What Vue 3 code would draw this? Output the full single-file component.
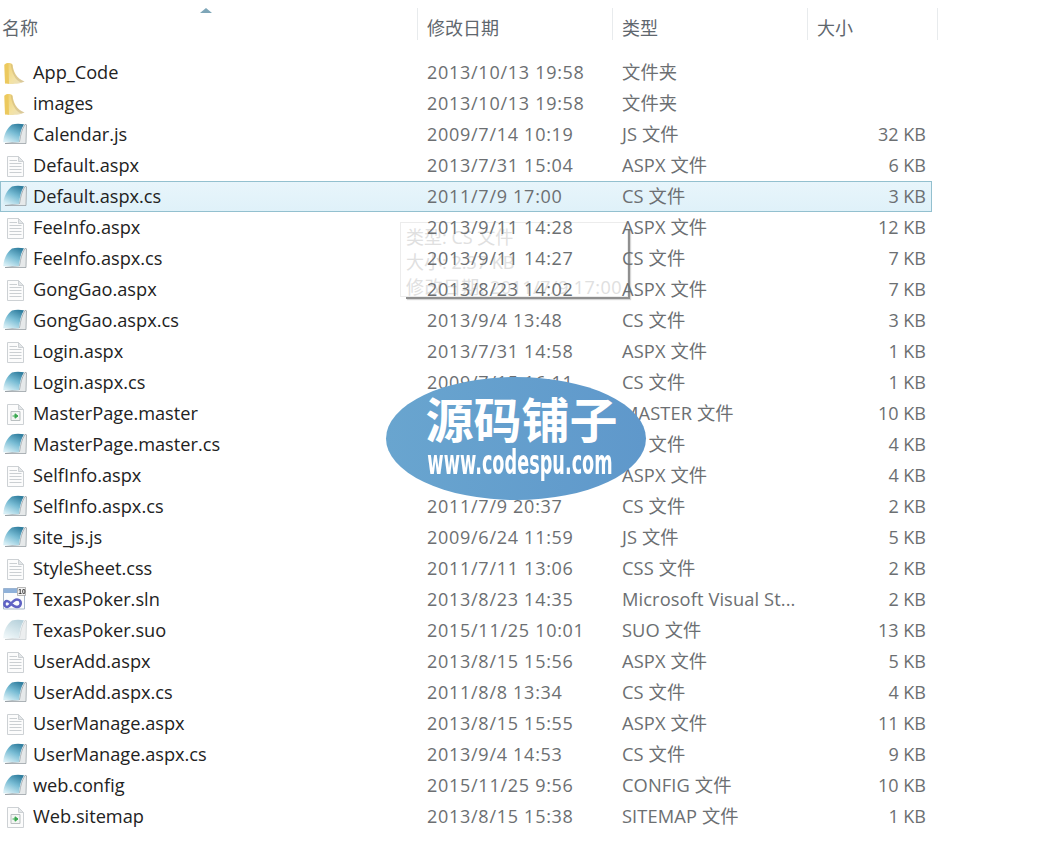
<script setup>
const rows = [
  ['App_Code','2013/10/13 19:58','文件夹','','folder'],
  ['images','2013/10/13 19:58','文件夹','','folder'],
  ['Calendar.js','2009/7/14 10:19','JS 文件','32 KB','cs'],
  ['Default.aspx','2013/7/31 15:04','ASPX 文件','6 KB','page'],
  ['Default.aspx.cs','2011/7/9 17:00','CS 文件','3 KB','cs'],
  ['FeeInfo.aspx','2013/9/11 14:28','ASPX 文件','12 KB','page'],
  ['FeeInfo.aspx.cs','2013/9/11 14:27','CS 文件','7 KB','cs'],
  ['GongGao.aspx','2013/8/23 14:02','ASPX 文件','7 KB','page'],
  ['GongGao.aspx.cs','2013/9/4 13:48','CS 文件','3 KB','cs'],
  ['Login.aspx','2013/7/31 14:58','ASPX 文件','1 KB','page'],
  ['Login.aspx.cs','2009/7/15 16:11','CS 文件','1 KB','cs'],
  ['MasterPage.master','2013/8/23 14:02','MASTER 文件','10 KB','master'],
  ['MasterPage.master.cs','2013/9/4 14:53','CS 文件','4 KB','cs'],
  ['SelfInfo.aspx','2013/8/15 15:56','ASPX 文件','4 KB','page'],
  ['SelfInfo.aspx.cs','2011/7/9 20:37','CS 文件','2 KB','cs'],
  ['site_js.js','2009/6/24 11:59','JS 文件','5 KB','cs'],
  ['StyleSheet.css','2011/7/11 13:06','CSS 文件','2 KB','page'],
  ['TexasPoker.sln','2013/8/23 14:35','Microsoft Visual St...','2 KB','sln'],
  ['TexasPoker.suo','2015/11/25 10:01','SUO 文件','13 KB','suo'],
  ['UserAdd.aspx','2013/8/15 15:56','ASPX 文件','5 KB','page'],
  ['UserAdd.aspx.cs','2011/8/8 13:34','CS 文件','4 KB','cs'],
  ['UserManage.aspx','2013/8/15 15:55','ASPX 文件','11 KB','page'],
  ['UserManage.aspx.cs','2013/9/4 14:53','CS 文件','9 KB','cs'],
  ['web.config','2015/11/25 9:56','CONFIG 文件','10 KB','cs'],
  ['Web.sitemap','2013/8/15 15:38','SITEMAP 文件','1 KB','master'],
].map(([name, date, type, size, icon]) => ({ name, date, type, size, icon }))
</script>

<template>
  <div class="screen">
    <svg class="defs" width="0" height="0" aria-hidden="true">
      <defs>
        <linearGradient id="blue" x1="0.8" y1="0" x2="0.25" y2="1">
          <stop offset="0" stop-color="#2c7a9b" />
          <stop offset="0.5" stop-color="#78bcd4" />
          <stop offset="1" stop-color="#d6eef5" />
        </linearGradient>
        <linearGradient id="pale" x1="0.8" y1="0" x2="0.25" y2="1">
          <stop offset="0" stop-color="#b5d0da" />
          <stop offset="1" stop-color="#eff7f9" />
        </linearGradient>
        <linearGradient id="yellow" x1="0" y1="0" x2="1" y2="1">
          <stop offset="0" stop-color="#f0cf68" />
          <stop offset="0.6" stop-color="#f3e2a4" />
          <stop offset="1" stop-color="#e8dfc4" />
        </linearGradient>
      </defs>
    </svg>

    <header class="head">
      <div class="hcell hname">名称<i class="sort"></i></div>
      <div class="hcell">修改日期</div>
      <div class="hcell">类型</div>
      <div class="hcell">大小</div>
    </header>

    <div class="list">
      <div v-for="r in rows" :key="r.name" class="row" :class="{ selected: r.name === 'Default.aspx.cs' }">
        <div class="name">
          <svg class="icon" width="27" height="29" viewBox="0 0 27 29">
            <template v-if="r.icon === 'folder'">
              <path d="M4.500 6.500C7 4.500 11 4.500 12.500 6.500C13 13 16.500 21 24.500 23.500C21 26 10 26.500 5 25.500Z" fill="url(#yellow)" />
              <path d="M4.500 7C5.500 5.500 7 5.200 8.500 5.200L9 25.800L5 25.300Z" fill="#ecc95e" />
              <path d="M12.500 7C13 14 17 21 24.500 23.500L21 24.500C15 22 11.300 14 10.800 5.700Z" fill="#c9b27a" opacity=".5" />
            </template>
            <template v-else-if="r.icon === 'cs' || r.icon === 'suo'">
              <path d="M25 4.300L26.500 4.800L26 23.500H5L19.500 21.500C20.500 15 22 9 25 4.300Z" :fill="r.icon === 'cs' ? '#e6e9ea' : '#eceeef'" :stroke="r.icon === 'cs' ? '#8e979c' : '#c6cbce'" stroke-width=".7" />
              <path d="M12 4.500C15.500 3.500 20 3.600 24 4.300C21 9 19.700 15 19 22.300H3.300C3.500 15 7 8 12 4.500Z" :fill="r.icon === 'cs' ? 'url(#blue)' : 'url(#pale)'" />
            </template>
            <template v-else-if="r.icon === 'sln'">
              <path d="M3.500 3.500H24.500V24H3.500Z" fill="#fbfcfd" stroke="#a9b8c9" />
              <path d="M3.500 3.500H17V8H3.500Z" fill="#8fb1d9" />
              <path d="M17.500 2.500H25.500V10.500H17.500Z" fill="#f2f2f2" stroke="#8a8a8a" stroke-width=".6" />
              <text x="18.300" y="9" class="badge">10</text>
              <path d="M7 16C10 16 12 22 17 22C22 22 22 14.500 17 14.500C12 14.500 10.500 22 7 22C3.500 22 3.500 16 7 16Z" fill="none" stroke="#5f62c4" stroke-width="2.600" />
            </template>
            <template v-else>
              <path d="M7.500 5.500H18.500L23.500 10.500V25.500H7.500Z" fill="#fcfcfc" stroke="#cdd1d4" />
              <path d="M18.500 5.500V10.500H23.500Z" fill="#e3e6e8" stroke="#cdd1d4" />
              <template v-if="r.icon === 'page'">
                <path d="M9.500 9.500H17M9.500 12.500H21.500M9.500 15.500H21.500M9.500 18.500H21.500M9.500 21.500H21.500" stroke="#cbcfd2" fill="none" />
              </template>
              <template v-else>
                <path d="M11 12.500H20V21.500H11Z" fill="#f2f5f2" stroke="#b9bfc0" />
                <path d="M12.500 17H16M15 14.800L18 17L15 19.200Z" fill="#38a84e" stroke="#38a84e" />
              </template>
            </template>
          </svg>
          <span class="fname">{{ r.name }}</span>
        </div>
        <div class="cell date">{{ r.date }}</div>
        <div class="cell type">{{ r.type }}</div>
        <div class="cell size">{{ r.size }}</div>
      </div>
    </div>

    <div class="tooltip">
      <div>类型: CS 文件</div>
      <div>大小: 2.37 KB</div>
      <div class="tip-date">修改日期: 2011/7/9 17:00</div>
    </div>

    <div class="mark">
      <div class="mark-cn">源码铺子</div>
      <div class="mark-en">www.codespu.com</div>
    </div>
  </div>
</template>

<style scoped>
.screen {
  position: relative;
  width: 1040px;
  height: 864px;
  overflow: hidden;
  background: #fff;
  font-family: "Open Sans", "Noto Sans CJK SC", sans-serif;
  font-size: 18px;
}
.defs { position: absolute; }
.head {
  display: grid;
  grid-template-columns: 418px 195px 195px 130px;
  height: 40px;
  width: 938px;
  position: relative;
  z-index: 2;
}
.hcell {
  position: relative;
  margin-top: 8px;
  height: 32px;
  box-sizing: border-box;
  padding: 8px 0 0 9px;
  line-height: 24px;
  color: #5f676e;
  border-right: 1px solid #e8ebed;
  font-size: 18px;
}
.hcell.hname { padding-left: 2px; }
.sort {
  position: absolute;
  left: 200px;
  top: 0;
  width: 0;
  height: 0;
  border-left: 6px solid transparent;
  border-right: 6px solid transparent;
  border-bottom: 5px solid #7ea6b8;
}
.list {
  margin-top: 17px;
  position: relative;
  z-index: 2;
}
.row {
  display: grid;
  grid-template-columns: 417px 195px 195px 125px;
  width: 932px;
  height: 31px;
  box-sizing: border-box;
  align-items: center;
  line-height: 29px;
}
.row.selected {
  background: linear-gradient(#e8f5fb, #dff1f9);
  box-shadow: inset 0 0 0 1px #93c0cf;
}
.name {
  display: flex;
  align-items: center;
  color: #222;
}
.icon { flex: none; margin-right: 6px; filter: blur(0.3px); }
.fname { white-space: nowrap; font-size: 18.2px; }
.cell {
  padding-left: 10px;
  color: #6c6f72;
  white-space: nowrap;
}
.cell.date { letter-spacing: 0.72px; }
.cell.type {
  font-size: 18.3px;
  letter-spacing: 0.1px;
  padding-bottom: 2px;
}
.cell.size {
  padding: 0 6px 0 0;
  text-align: right;
}
.badge {
  font-family: "Liberation Sans", sans-serif;
  font-size: 6.500px;
  font-weight: 700;
  fill: #333;
}
.tooltip {
  position: absolute;
  left: 400px;
  top: 222px;
  width: 228px;
  height: 75px;
  box-sizing: border-box;
  padding: 2px 5px;
  border: 1px solid #ececec;
  color: #e0e0e0;
  font-size: 18px;
  line-height: 25px;
  white-space: nowrap;
  z-index: 1;
}
.tooltip::before {
  content: "";
  position: absolute;
  right: -3px;
  bottom: -3px;
  width: 222px;
  height: 68px;
  border-right: 2px solid #8f8f8f;
  border-bottom: 2px solid #8f8f8f;
  box-shadow: 1px 1px 1px #d6d6d6;
}
.tip-date { letter-spacing: 0.45px; }
.mark {
  position: absolute;
  left: 386px;
  top: 377px;
  width: 260px;
  height: 123px;
  border-radius: 50%;
  background: linear-gradient(90deg, #69a5cf, #5f98cb);
  color: #fff;
  text-align: center;
  z-index: 3;
}
.mark-cn {
  margin: 13px 0 0 11px;
  font-family: "Noto Sans CJK SC", sans-serif;
  font-weight: 700;
  font-size: 48px;
  line-height: 54px;
}
.mark-en {
  width: 360px;
  margin: 0 0 0 -46px;
  font-family: "DejaVu Sans", sans-serif;
  font-weight: 700;
  font-size: 34px;
  line-height: 36px;
  white-space: nowrap;
  transform: scaleX(0.52);
}
</style>
